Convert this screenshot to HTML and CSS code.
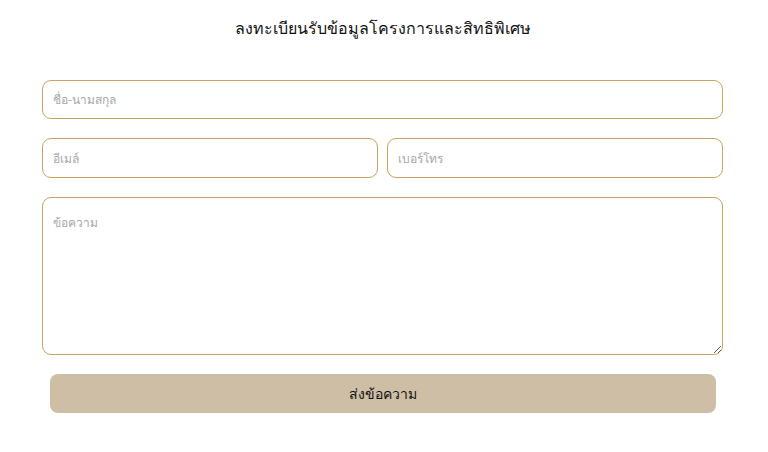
FILE: index.html
```html
<!DOCTYPE html>
<html lang="th">
<head>
<meta charset="utf-8">
<link rel="stylesheet" href="styles.css">
</head>
<body>
<div class="wrap">
  <h1 class="title">ลงทะเบียนรับข้อมูลโครงการและสิทธิพิเศษ</h1>
  <form class="form">
    <input class="field" type="text" placeholder="ชื่อ-นามสกุล">
    <div class="row">
      <input class="field tall" type="email" placeholder="อีเมล์">
      <input class="field tall" type="tel" placeholder="เบอร์โทร">
    </div>
    <textarea class="field area" placeholder="ข้อความ"></textarea>
    <button class="btn" type="button">ส่งข้อความ</button>
  </form>
</div>
</body>
</html>
```
FILE: styles.css
```css
html, body {
  margin: 0;
  background: #ffffff;
}
body {
  font-family: "Noto Sans", "Liberation Sans", sans-serif;
  color: #111;
}
.wrap {
  padding: 16px 45px 0 42px;
}
.title {
  margin: 0 0 40px;
  text-align: center;
  font-size: 16px;
  font-weight: 400;
  line-height: 24px;
  color: #111;
}
.form {
  display: flex;
  flex-direction: column;
  gap: 19px;
}
.row {
  display: grid;
  grid-template-columns: 1fr 1fr;
  gap: 9px;
}
.field {
  box-sizing: border-box;
  width: 100%;
  height: 39px;
  border: 1px solid #c9a45c;
  border-radius: 9px;
  padding: 0 10px;
  font-family: inherit;
  font-size: 12px;
  color: #333;
  background: #fff;
  outline: none;
}
.field.tall {
  height: 40px;
}
.field::placeholder {
  color: #a8a8a8;
}
.area {
  height: 158px;
  padding-top: 15px;
  resize: vertical;
}
.btn {
  margin: 0 7px 0 8px;
  height: 39px;
  border: none;
  border-radius: 8px;
  background: #cdbea5;
  font-family: inherit;
  font-size: 14px;
  color: #111;
}
```
